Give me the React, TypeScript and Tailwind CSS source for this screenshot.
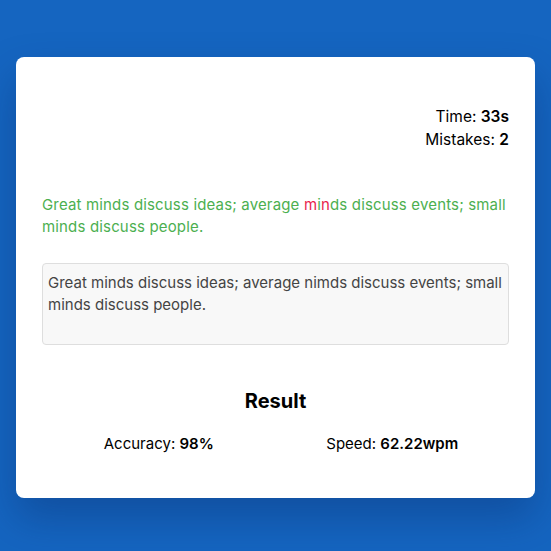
import React from 'react';

const quote = 'Great minds discuss ideas; average minds discuss events; small minds discuss people.';
const typed = 'Great minds discuss ideas; average nimds discuss events; small minds discuss people.';

export default function App() {
  const chars = quote.split('').map((ch, i) => {
    const ok = typed[i] === ch;
    return (
      <span key={i} className={ok ? 'text-[#4caf50]' : 'text-[#e91e4c]'}>
        {ch}
      </span>
    );
  });

  return (
    <div
      className="w-[551px] h-[551px] bg-[#1565c0] px-4 pt-[57px]"
      style={{ fontFamily: 'Inter, "Open Sans", sans-serif' }}
    >
      <div className="bg-white rounded-lg shadow-[0_20px_40px_rgba(10,40,100,0.35)] h-[441px] px-[26px] pt-[48px]">
        {/* Stats */}
        <div className="flex flex-col items-end text-[15.5px] leading-[23px] text-black">
          <p>
            Time: <span className="font-semibold">33s</span>
          </p>
          <p>
            Mistakes: <span className="font-semibold">2</span>
          </p>
        </div>

        {/* Quote */}
        <p className="mt-[43px] text-[15px] leading-[22px] tracking-[0.15px]">{chars}</p>

        {/* Input */}
        <div className="mt-[25px] h-[82px] rounded bg-[#f8f8f8] border border-[#dedede] px-[5px] py-[8px] text-[15px] leading-[22px] text-[#444]">
          {typed}
        </div>

        {/* Result */}
        <h2 className="mt-[41px] text-center text-[20px] font-bold text-black">Result</h2>
        <div className="mt-[17px] grid grid-cols-2 text-[15px] text-black">
          <p className="text-center">
            Accuracy: <span className="font-semibold">98%</span>
          </p>
          <p className="text-center">
            Speed: <span className="font-semibold">62.22wpm</span>
          </p>
        </div>
      </div>
    </div>
  );
}
